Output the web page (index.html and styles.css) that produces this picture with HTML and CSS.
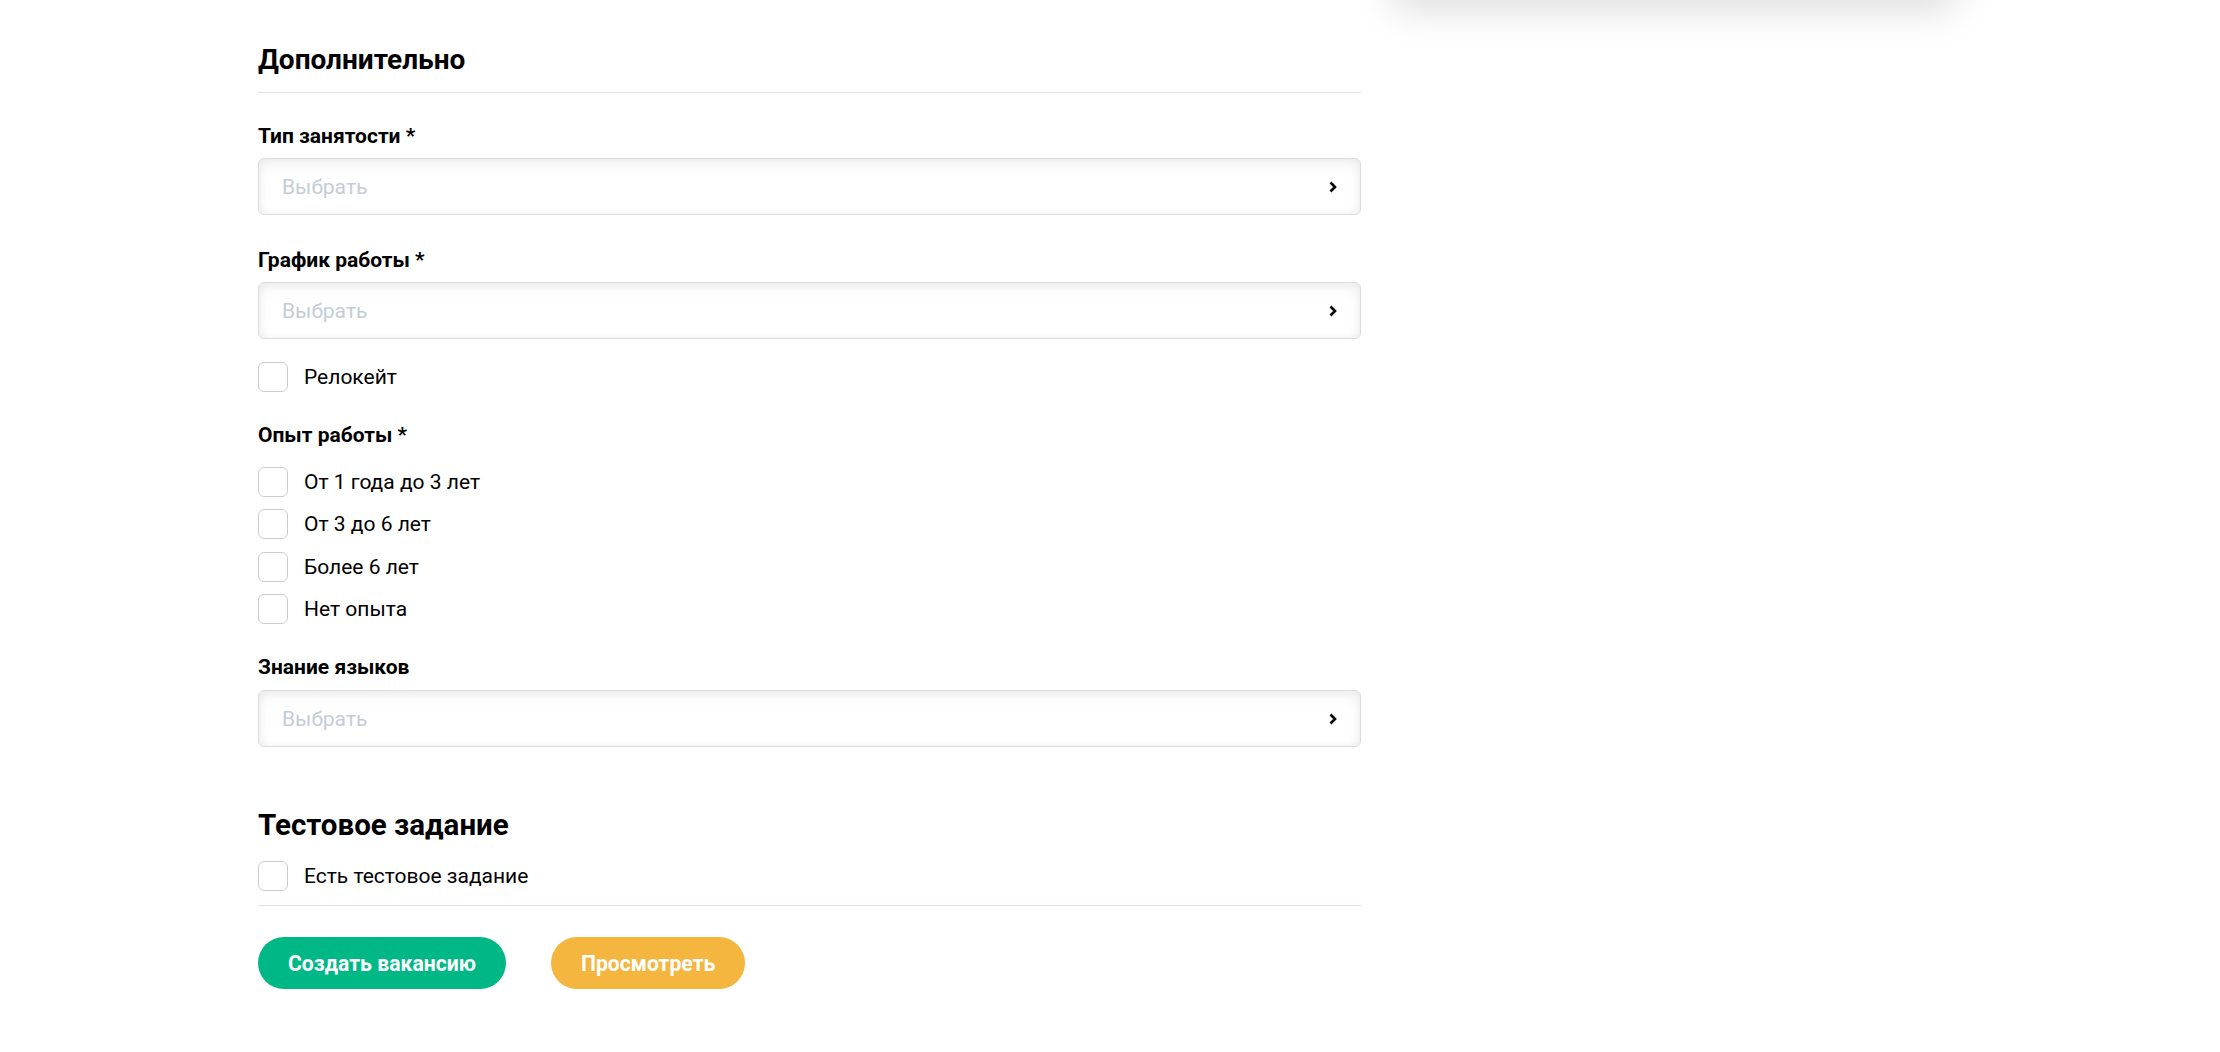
FILE: index.html
```html
<!DOCTYPE html>
<html lang="ru">
<head>
  <meta charset="UTF-8" />
  <title>Создать вакансию</title>
  <link rel="stylesheet" href="styles.css">
</head>
<body>

<div class="page">
  <main class="vacancy-form">
    <h2 class="section-title">Дополнительно</h2>

    <div class="field">
      <label class="field-label">Тип занятости *</label>
      <div class="select">
        <span class="select-placeholder">Выбрать</span>
        <svg class="chevron" width="8" height="12" viewBox="0 0 8 12"><polyline points="1.5,1.5 6,6 1.5,10.5" /></svg>
      </div>
    </div>

    <div class="field">
      <label class="field-label">График работы *</label>
      <div class="select">
        <span class="select-placeholder">Выбрать</span>
        <svg class="chevron" width="8" height="12" viewBox="0 0 8 12"><polyline points="1.5,1.5 6,6 1.5,10.5" /></svg>
      </div>
    </div>

    <label class="check relocate">
      <input type="checkbox">
      <span>Релокейт</span>
    </label>

    <div class="field experience">
      <label class="field-label">Опыт работы *</label>
      <div class="check-list">
        <label class="check"><input type="checkbox"><span>От 1 года до 3 лет</span></label>
        <label class="check"><input type="checkbox"><span>От 3 до 6 лет</span></label>
        <label class="check"><input type="checkbox"><span>Более 6 лет</span></label>
        <label class="check"><input type="checkbox"><span>Нет опыта</span></label>
      </div>
    </div>

    <div class="field languages">
      <label class="field-label">Знание языков</label>
      <div class="select">
        <span class="select-placeholder">Выбрать</span>
        <svg class="chevron" width="8" height="12" viewBox="0 0 8 12"><polyline points="1.5,1.5 6,6 1.5,10.5" /></svg>
      </div>
    </div>

    <h2 class="section-title plain test-title">Тестовое задание</h2>

    <div class="test-block">
      <label class="check">
        <input type="checkbox">
        <span>Есть тестовое задание</span>
      </label>
    </div>

    <div class="actions">
      <button class="btn btn-create">Создать вакансию</button>
      <button class="btn btn-preview">Просмотреть</button>
    </div>
  </main>

  <!-- sidebar card, scrolled above the viewport -->
  <aside class="sidebar">
    <div class="summary-card"></div>
  </aside>
</div>

</body>
</html>
```

FILE: styles.css
```css
:root {
  --text: #111;
  --line: #e1e1f6;
  --green: #00b886;
  --yellow: #f4b63f;
  --placeholder: #c3cdd7;
}

body {
  margin: 0;
  background: #fff;
  font-family: Roboto, 'Liberation Sans', sans-serif;
  color: var(--text);
  overflow: hidden;
}

.page {
  display: flex;
  align-items: flex-start;
  padding-left: 258px;
}

.vacancy-form {
  width: 1103px;
  padding-top: 43px;
}

.section-title {
  margin: 0;
  font-size: 28px;
  line-height: 34px;
  font-weight: 700;
  color: #000;
  padding-bottom: 15px;
  border-bottom: 1px solid var(--line);
}

.section-title.plain {
  border-bottom: none;
  padding-bottom: 0;
}

.field {
  margin-top: 31px;
}

.field + .field {
  margin-top: 33px;
}

.field.experience {
  margin-top: 31px;
}

.field.languages {
  margin-top: 30.5px;
}

.field-label {
  display: block;
  font-size: 21px;
  line-height: 25px;
  font-weight: 700;
  color: #000;
  margin-bottom: 9px;
}

.languages .field-label {
  margin-bottom: 10.5px;
}

.select {
  display: flex;
  align-items: center;
  justify-content: space-between;
  height: 57px;
  box-sizing: border-box;
  padding: 0 23px 0 23px;
  border: 1px solid #dcdcdc;
  border-radius: 6px;
  background: #fff;
  box-shadow: inset 0 5px 14px rgba(0,0,0,0.06), inset 0 0 9px rgba(0,0,0,0.05);
}

.select-placeholder {
  font-size: 21px;
  color: var(--placeholder);
}

.chevron {
  fill: none;
  stroke: #000;
  stroke-width: 2.6;
}

.check {
  display: flex;
  align-items: center;
  gap: 16px;
  font-size: 21px;
  line-height: 30px;
  color: #000;
}

.check input {
  appearance: none;
  -webkit-appearance: none;
  margin: 0;
  width: 30px;
  height: 30px;
  flex-shrink: 0;
  box-sizing: border-box;
  border: 1.5px solid #cdcdcd;
  border-radius: 6px;
  background: #fff;
}

.relocate {
  margin-top: 23px;
}

.check-list {
  display: flex;
  flex-direction: column;
  gap: 12.4px;
  padding-top: 10px;
}

.test-title {
  margin-top: 61px;
  font-size: 29.5px;
}

.test-block {
  margin-top: 19px;
  padding-bottom: 14px;
  border-bottom: 1px solid var(--line);
}

.actions {
  display: flex;
  gap: 45px;
  margin-top: 31px;
}

.btn {
  height: 52px;
  padding: 0 30px;
  border: none;
  border-radius: 26px;
  font-family: inherit;
  font-size: 21.2px;
  font-weight: 700;
  color: #fff;
  cursor: pointer;
}

.btn-create {
  background: var(--green);
}

.btn-preview {
  background: var(--yellow);
}

/* Sidebar */
.sidebar {
  margin-left: 32px;
  width: 562px;
}

.summary-card {
  height: 400px;
  margin-top: -402px;
  background: #fff;
  border-radius: 12px;
  box-shadow: 0 10px 40px rgba(0,0,0,0.15);
}
```
